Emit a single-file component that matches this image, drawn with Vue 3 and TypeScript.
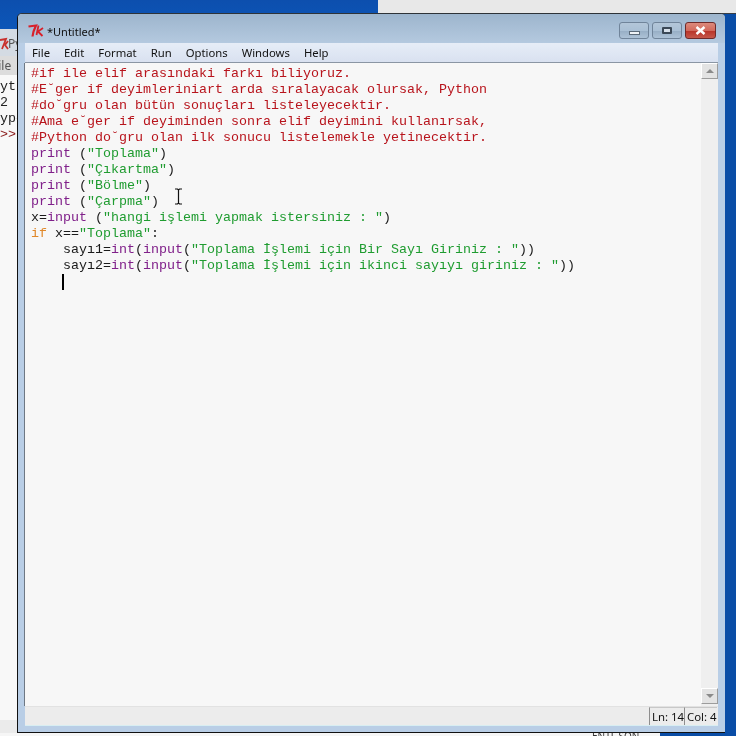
<script setup lang="ts">
type Tok = { t: string; c: string };
const c = (t: string): Tok[] => [{ t, c: 'cm' }];
const pr = (s: string): Tok[] => [
  { t: 'print', c: 'bi' },
  { t: ' (', c: 'pl' },
  { t: s, c: 'st' },
  { t: ')', c: 'pl' },
];
const lines: Tok[][] = [
  c('#if ile elif arasındaki farkı biliyoruz.'),
  c('#E˘ger if deyimleriniart arda sıralayacak olursak, Python'),
  c('#do˘gru olan bütün sonuçları listeleyecektir.'),
  c('#Ama e˘ger if deyiminden sonra elif deyimini kullanırsak,'),
  c('#Python do˘gru olan ilk sonucu listelemekle yetinecektir.'),
  pr('"Toplama"'),
  pr('"Çıkartma"'),
  pr('"Bölme"'),
  pr('"Çarpma"'),
  [
    { t: 'x=', c: 'pl' },
    { t: 'input', c: 'bi' },
    { t: ' (', c: 'pl' },
    { t: '"hangi işlemi yapmak istersiniz : "', c: 'st' },
    { t: ')', c: 'pl' },
  ],
  [
    { t: 'if', c: 'kw' },
    { t: ' x==', c: 'pl' },
    { t: '"Toplama"', c: 'st' },
    { t: ':', c: 'pl' },
  ],
  [
    { t: 'sayı1=', c: 'pl ind' },
    { t: 'int', c: 'bi' },
    { t: '(', c: 'pl' },
    { t: 'input', c: 'bi' },
    { t: '(', c: 'pl' },
    { t: '"Toplama İşlemi için Bir Sayı Giriniz : "', c: 'st' },
    { t: '))', c: 'pl' },
  ],
  [
    { t: 'sayı2=', c: 'pl ind' },
    { t: 'int', c: 'bi' },
    { t: '(', c: 'pl' },
    { t: 'input', c: 'bi' },
    { t: '(', c: 'pl' },
    { t: '"Toplama İşlemi için ikinci sayıyı giriniz : "', c: 'st' },
    { t: '))', c: 'pl' },
  ],
];
const menus = ['File', 'Edit', 'Format', 'Run', 'Options', 'Windows', 'Help'];
const shellLines = ['Pytl', '32', 'Type', '>>>'];
</script>

<template>
  <div class="desktop">
    <div class="top-blue"></div>
    <div class="top-light"></div>
    <div class="right-blue"></div>

    <div class="back-window">
      <div class="back-title">
        <svg class="back-icon" width="9" height="14" viewBox="0 0 9 14">
          <path d="M0 3 L6 2 L2 12 M5 8 L8 4 M5 8 L8 12" fill="none" stroke="#c9302c" stroke-width="1.8" />
        </svg>
        <span>Py</span>
      </div>
      <div class="back-menu">File</div>
      <div class="back-text">
        <div v-for="(s, i) in shellLines" :key="i" :class="{ prompt: s === '>>>' }">{{ s }}</div>
      </div>
      <div class="back-status"></div>
    </div>

    <div class="under-text">ENTF SON</div>

    <div class="window">
      <div class="title-bar">
        <svg class="tk" width="16" height="14" viewBox="0 0 16 14">
          <path d="M0.5 2.5 L8 1.5 C6.5 4.5 5 8 4.5 12.5" fill="none" stroke="#d8202a" stroke-width="2.2" />
          <path d="M10.5 1.5 L8.5 11 M15 4 L10 7.5 L14.5 12" fill="none" stroke="#d8202a" stroke-width="1.8" />
        </svg>
        <span class="title-text">*Untitled*</span>
        <div class="controls">
          <div class="ctl">
            <span class="min-glyph"></span>
          </div>
          <div class="ctl">
            <span class="max-glyph"></span>
          </div>
          <div class="ctl close">
            <svg width="11" height="9" viewBox="0 0 11 9">
              <path d="M1.5 1 L9.5 8 M9.5 1 L1.5 8" stroke="#fff" stroke-width="2.4" fill="none" />
            </svg>
          </div>
        </div>
      </div>

      <div class="client">
        <div class="menu-bar">
          <span v-for="m in menus" :key="m" class="menu-item">{{ m }}</span>
        </div>
        <div class="editor-row">
          <div class="editor">
            <div v-for="(line, i) in lines" :key="i" class="code-line">
              <span v-for="(tok, j) in line" :key="j" :class="tok.c">{{ tok.t }}</span>
            </div>
            <div class="code-line"><span class="caret"></span></div>
            <svg class="ibeam" width="9" height="17" viewBox="0 0 9 17">
              <path d="M1 1 H3.5 L4.5 2 L5.5 1 H8 M4.5 2 V15 M1 16 H3.5 L4.5 15 L5.5 16 H8" fill="none" stroke="#111" stroke-width="1.2" />
            </svg>
          </div>
          <div class="scrollbar">
            <div class="sb-btn"><span class="arrow up"></span></div>
            <div class="sb-track"></div>
            <div class="sb-btn"><span class="arrow down"></span></div>
          </div>
        </div>
        <div class="status-bar">
          <span class="status-cell ln">Ln: 14</span>
          <span class="status-cell col">Col: 4</span>
        </div>
      </div>
    </div>
  </div>
</template>

<style>
html, body { margin: 0; padding: 0; background: #f4f4f4; }
</style>

<style scoped>
.desktop {
  position: relative;
  width: 736px;
  height: 736px;
  overflow: hidden;
  background: #f6f6f6;
  filter: blur(0.3px);
}
.top-blue {
  position: absolute;
  left: 0;
  top: 0;
  width: 378px;
  height: 29px;
  background: linear-gradient(#0d4fae, #0c56b8);
}
.top-light {
  position: absolute;
  left: 378px;
  top: 0;
  width: 358px;
  height: 14px;
  background: #e8e8e8;
  border-bottom: 1px solid #3a3f44;
  box-sizing: border-box;
}
.right-blue {
  position: absolute;
  left: 660px;
  top: 14px;
  width: 76px;
  height: 722px;
  background: #0a4da6;
}
.back-window {
  position: absolute;
  left: -8px;
  top: 29px;
  width: 200px;
  height: 704px;
  display: flex;
  flex-direction: column;
  font-family: "Liberation Mono", monospace;
  background: #f8f8f8;
}
.back-title {
  flex: none;
  height: 27px;
  display: flex;
  align-items: center;
  padding: 2px 0 0 8px;
  box-sizing: border-box;
  background: #d4dbe3;
  font: 12px "Noto Sans", sans-serif;
  color: #555;
  white-space: nowrap;
}
.back-icon { flex: none; margin-right: -1px; }
.back-menu {
  flex: none;
  height: 19px;
  background: #dcdcdc;
  font: 12px/20px "Noto Sans", sans-serif;
  color: #555;
  white-space: nowrap;
}
.back-text {
  flex: 1;
  padding-top: 4px;
  font-size: 13.33px;
  line-height: 16px;
  color: #222;
  white-space: nowrap;
}
.back-status {
  flex: none;
  height: 13px;
  background: #ebebeb;
}
.prompt { color: #8a1c1c; }
.under-text {
  position: absolute;
  left: 380px;
  top: 733px;
  width: 280px;
  height: 3px;
  padding-left: 212px;
  box-sizing: border-box;
  overflow: hidden;
  background: #f6f6f6;
  font: 10px/6px "Noto Sans", sans-serif;
  color: #333;
  white-space: nowrap;
}
.window {
  position: absolute;
  left: 17px;
  top: 13px;
  width: 708px;
  height: 720px;
  box-sizing: border-box;
  border-left: 1px solid #111;
  border-top: 1px solid #2e3338;
  border-bottom: 1px solid #111;
  border-radius: 5px 5px 0 0;
  background: #b9cee6;
  display: flex;
  flex-direction: column;
}
.title-bar {
  flex: none;
  height: 29px;
  display: flex;
  align-items: center;
  padding: 0 9px 0 10px;
  background: linear-gradient(#9db5cd, #b4c9df);
  border-radius: 4px 4px 0 0;
}
.tk { flex: none; margin-top: 4px; }
.title-text {
  margin-left: 3px;
  margin-top: 5px;
  font: 11px "Noto Sans", sans-serif;
  color: #111;
}
.controls {
  margin-left: auto;
  display: flex;
  gap: 3px;
  margin-top: -1px;
  align-self: flex-start;
  padding-top: 9px;
}
.ctl {
  width: 30px;
  height: 17px;
  box-sizing: border-box;
  border: 1px solid #70849a;
  border-radius: 3px;
  background: linear-gradient(#b3c6d9 0%, #aac0d5 50%, #98afc6 55%, #adc2d7 100%);
  display: flex;
  align-items: center;
  justify-content: center;
}
.close {
  width: 31px;
  border-color: #6e2a2a;
  background: linear-gradient(#dc8a7c 0%, #d2695c 50%, #b9352a 55%, #c5574a 100%);
}
.min-glyph {
  display: block;
  width: 9px;
  height: 2px;
  margin-top: 5px;
  background: #eef2f6;
  border: 1px solid #5a6978;
}
.max-glyph {
  display: block;
  width: 6px;
  height: 3px;
  background: #d7e0ea;
  border: 2px solid #3b4856;
  border-radius: 1px;
}
.client {
  flex: 1;
  margin: 0 7px 6px 7px;
  display: flex;
  flex-direction: column;
  min-height: 0;
  border-bottom: 1px solid #d8eef2;
}
.menu-bar {
  flex: none;
  height: 19px;
  display: flex;
  align-items: center;
  gap: 14px;
  padding: 0 7px;
  background: linear-gradient(#e6edf7, #d9e1f0);
  border-bottom: 1px solid #8b96a4;
  font: 11.3px "Noto Sans", sans-serif;
  color: #111;
}
.editor-row {
  flex: 1;
  min-height: 0;
  display: flex;
}
.editor {
  position: relative;
  flex: 1;
  padding: 3px 0 0 6px;
  background: #f7f7f7;
  border-left: 1px solid #6e7884;
  margin-left: -1px;
  font-family: "Liberation Mono", monospace;
  font-size: 13.33px;
  line-height: 16px;
}
.code-line {
  height: 16px;
  white-space: pre;
}
.cm { color: #b8141c; }
.bi { color: #80208a; }
.st { color: #1f9c30; }
.kw { color: #e0882a; }
.pl { color: #1a1a1a; }
.ind { margin-left: 32px; }
.caret {
  display: block;
  width: 2px;
  height: 16px;
  margin-left: 31px;
  background: #000;
}
.ibeam {
  position: absolute;
  left: 149px;
  top: 125px;
}
.scrollbar {
  flex: none;
  width: 17px;
  display: flex;
  flex-direction: column;
  background: #efefef;
  padding-bottom: 2px;
}
.sb-track { flex: 1; }
.sb-btn {
  flex: none;
  height: 16px;
  box-sizing: border-box;
  background: #e3e3e3;
  border: 1px solid;
  border-color: #fff #9c9c9c #9c9c9c #fff;
  display: flex;
  align-items: center;
  justify-content: center;
}
.arrow {
  width: 0;
  height: 0;
  border-left: 4px solid transparent;
  border-right: 4px solid transparent;
}
.up { border-bottom: 4px solid #8a8a8a; }
.down { border-top: 4px solid #8a8a8a; }
.status-bar {
  flex: none;
  height: 19px;
  display: flex;
  justify-content: flex-end;
  background: #ececec;
  border-top: 1px solid #e2e2e2;
  box-sizing: border-box;
  padding-right: 1px;
}
.status-cell {
  box-sizing: border-box;
  height: 18px;
  border-left: 1px solid #8e8e8e;
  border-top: 1px solid #c8c8c8;
  font: 11.4px/17px "Noto Sans", sans-serif;
  color: #111;
  padding-left: 2px;
  white-space: nowrap;
}
.ln { width: 35px; }
.col { width: 33px; }
</style>
